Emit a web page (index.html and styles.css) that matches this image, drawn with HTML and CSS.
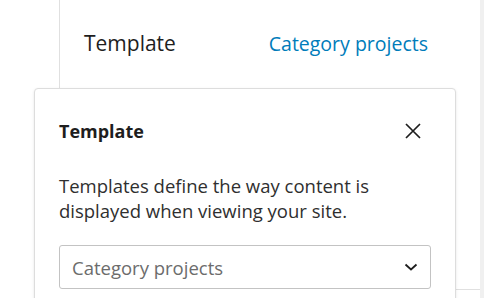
FILE: index.html
```html
<!DOCTYPE html>
<html>
<head>
    <title>Template</title>
    <meta name="viewport" content="width=device-width, initial-scale=1.0">
    <link rel="stylesheet" href="styles.css">
</head>
<body>
    <div class="frame">
        <div class="gutter"></div>
        <div class="panel">
            <div class="row">
                <span class="row-label">Template</span>
                <a class="row-value" href="#">Category projects</a>
            </div>
            <div class="section"></div>
        </div>
        <div class="strip"></div>

        <div class="popover">
            <div class="popover-head">
                <h2>Template</h2>
                <button class="close" aria-label="Close">
                    <svg width="24" height="24" viewBox="0 0 24 24">
                        <path d="M5 5l14 14M19 5l-14 14" stroke="#1e1e1e" stroke-width="1.7" fill="none"/>
                    </svg>
                </button>
            </div>
            <p class="help">Templates define the way content is displayed when viewing your site.</p>
            <div class="select">
                <span>Category projects</span>
                <svg width="14" height="14" viewBox="0 0 14 14">
                    <path d="M1.5 4.5l5.5 5 5.5-5" stroke="#1e1e1e" stroke-width="1.8" fill="none"/>
                </svg>
            </div>
        </div>
    </div>
</body>
</html>
```

FILE: styles.css
```css
body {
    margin: 0;
    font-family: "Open Sans", "Noto Sans", sans-serif;
    color: #1e1e1e;
    background: #fff;
}
.frame {
    position: relative;
    display: flex;
    width: 484px;
    height: 298px;
    overflow: hidden;
}
.gutter {
    width: 59px;
}
.panel {
    flex: 1;
    border-left: 1px solid #e0e0e0;
}
.strip {
    width: 4px;
    background: #f0f0f0;
}
.row {
    display: flex;
    justify-content: space-between;
    align-items: center;
    height: 86px;
    padding: 0 52px 2px 24px;
}
.row-label {
    font-size: 21px;
}
.row-value {
    font-size: 19.5px;
    color: #007cba;
    text-decoration: none;
}
.section {
    height: 201px;
    border-bottom: 1px solid #e0e0e0;
}
.popover {
    position: absolute;
    left: 34px;
    top: 88px;
    width: 372px;
    height: 240px;
    padding: 0 24px;
    background: #fff;
    border: 1px solid #ddd;
    border-radius: 4px;
    box-shadow: 0 1px 3px rgba(0,0,0,0.1);
}
.popover-head {
    display: flex;
    justify-content: space-between;
    align-items: center;
    height: 84px;
}
.popover-head h2 {
    margin: 0;
    font-size: 18px;
    font-weight: 700;
}
.close {
    display: flex;
    background: none;
    border: none;
    padding: 0;
    margin-right: 6px;
    cursor: pointer;
}
.help {
    margin: 0 0 22px;
    font-size: 18.5px;
    line-height: 25px;
    color: #2f2f2f;
}
.select {
    display: flex;
    justify-content: space-between;
    align-items: center;
    height: 42px;
    padding: 0 12px;
    border: 1px solid #c3c3c3;
    border-radius: 3px;
    font-size: 18.5px;
    color: #6c6c6c;
}
```
